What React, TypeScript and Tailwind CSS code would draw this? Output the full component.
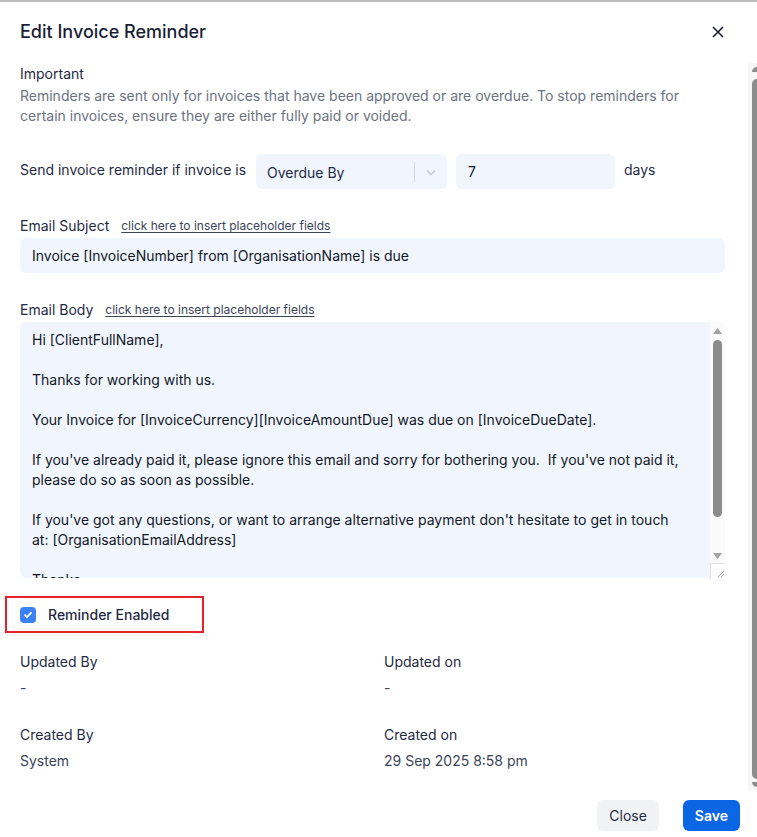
import React, { useState } from 'react';

const bodyLines = [
  'Hi [ClientFullName],',
  '',
  'Thanks for working with us.',
  '',
  'Your Invoice for [InvoiceCurrency][InvoiceAmountDue] was due on [InvoiceDueDate].',
  '',
  "If you've already paid it, please ignore this email and sorry for bothering you.  If you've not paid it,",
  'please do so as soon as possible.',
  '',
  "If you've got any questions, or want to arrange alternative payment don't hesitate to get in touch",
  'at: [OrganisationEmailAddress]',
  '',
  'Thanks,',
  '[OrganisationName]',
];

const FieldLabel: React.FC<{ label: string }> = ({ label }) => (
  <div className="flex items-center gap-3 h-5">
    <span className="text-sm text-[#1f2a44]">{label}</span>
    <button className="text-xs text-[#3b4457] underline underline-offset-2">click here to insert placeholder fields</button>
  </div>
);

const Meta: React.FC<{ label: string; value: string }> = ({ label, value }) => (
  <div className="flex flex-col gap-[6px]">
    <span className="text-sm leading-5 text-[#1f2a44]">{label}</span>
    <span className="text-sm leading-5 text-[#3b4457]">{value}</span>
  </div>
);

export default function App() {
  const [enabled, setEnabled] = useState(true);
  const [days, setDays] = useState('7');
  const [subject, setSubject] = useState('Invoice [InvoiceNumber] from [OrganisationName] is due');

  return (
    <div className="flex h-[837px] overflow-hidden bg-white border-t-2 border-[#bdbdbd] font-['Inter',sans-serif]">
      <div className="w-[745px] px-5 pt-[16px]">
        {/* Header */}
        <div className="flex items-center justify-between h-7">
          <h2 className="text-lg font-medium text-[#1a1f36]">Edit Invoice Reminder</h2>
          <button className="text-[#1a1f36]">
            <svg width="14" height="14" viewBox="0 0 14 14" fill="none" stroke="currentColor" strokeWidth="1.6">
              <path d="M2 2l10 10M12 2L2 12" />
            </svg>
          </button>
        </div>

        {/* Notice */}
        <div className="mt-[18px]">
          <div className="text-sm leading-5 text-[#1f2a44]">Important</div>
          <p className="mt-0.5 text-sm leading-5 text-[#6b7280] pr-10">
            Reminders are sent only for invoices that have been approved or are overdue. To stop reminders for certain invoices, ensure they are either fully paid or voided.
          </p>
        </div>

        {/* Trigger row */}
        <div className="mt-7 flex items-center gap-[9px]">
          <span className="w-[227px] text-sm text-[#1f2a44] -mt-[3px]">Send invoice reminder if invoice is</span>
          <div className="flex items-center w-[191px] h-[35px] rounded-md bg-[#f1f5fd] pl-[11px]">
            <span className="flex-1 text-sm text-[#1f2a44] pt-0.5">Overdue By</span>
            <span className="w-px h-5 bg-[#d4d8e0]" />
            <span className="w-8 flex justify-center text-[#c2c6cf]">
              <svg width="12" height="12" viewBox="0 0 12 12" fill="none" stroke="currentColor" strokeWidth="1.3">
                <path d="M2 4.5l4 4 4-4" />
              </svg>
            </span>
          </div>
          <input
            className="w-[159px] h-[35px] rounded-md bg-[#f1f5fd] px-3 text-sm text-[#111827] outline-none"
            value={days}
            onChange={(e) => setDays(e.target.value)}
          />
          <span className="text-sm text-[#1f2a44] -mt-[3px]">days</span>
        </div>

        {/* Subject */}
        <div className="mt-[27px]">
          <FieldLabel label="Email Subject" />
          <input
            className="mt-0.5 w-full h-[35px] rounded-md bg-[#f1f5fd] px-3 text-sm text-[#111827] outline-none"
            value={subject}
            onChange={(e) => setSubject(e.target.value)}
          />
        </div>

        {/* Body */}
        <div className="mt-[27px]">
          <FieldLabel label="Email Body" />
          <div className="mt-0.5 flex h-[256px] rounded-l-md bg-[#f1f5fd] overflow-hidden">
            <div className="flex-1 pl-3 pt-2 text-sm leading-5 text-[#111827] whitespace-pre">
              {bodyLines.map((line, i) => (
                <div key={i} className="h-5">{line}</div>
              ))}
            </div>
            {/* native-style scrollbar */}
            <div className="w-[15px] flex flex-col items-center bg-[#fafafa]">
              <svg className="mt-1.5" width="9" height="6" viewBox="0 0 9 6"><path d="M4.5 0L9 6H0z" fill="#a3a3a3" /></svg>
              <div className="mt-[6px] w-[9px] h-[177px] rounded-full bg-[#8c8c8c]" />
              <svg className="mt-[36px]" width="9" height="6" viewBox="0 0 9 6"><path d="M0 0h9L4.5 6z" fill="#a3a3a3" /></svg>
              <div className="mt-auto w-[15px] h-[15px] border-l border-t border-[#e2e2e2] bg-white flex items-end justify-end">
                <svg width="10" height="10" viewBox="0 0 10 10" stroke="#9a9a9a" strokeWidth="1">
                  <path d="M9 3L3 9M9 6L6 9" />
                </svg>
              </div>
            </div>
          </div>
        </div>

        {/* Enabled toggle */}
        <div className="mt-[18px] -ml-[15px] w-[199px] h-[37px] border-2 border-[#e3232b] flex items-center pl-[13px] gap-3">
          <button
            onClick={() => setEnabled(!enabled)}
            className={`w-4 h-4 rounded-[4px] flex items-center justify-center ${enabled ? 'bg-[#3b82f6]' : 'bg-white border border-gray-300'}`}
          >
            {enabled && (
              <svg width="10" height="10" viewBox="0 0 10 10" fill="none" stroke="white" strokeWidth="1.8" strokeLinecap="round" strokeLinejoin="round">
                <path d="M2 5.2l2 2 4-4.4" />
              </svg>
            )}
          </button>
          <span className="text-sm font-medium text-[#1f2a44]">Reminder Enabled</span>
        </div>

        {/* Audit info */}
        <div className="mt-[19px] grid grid-cols-[364px_1fr] gap-y-[27px]">
          <Meta label="Updated By" value="-" />
          <Meta label="Updated on" value="-" />
          <Meta label="Created By" value="System" />
          <Meta label="Created on" value="29 Sep 2025 8:58 pm" />
        </div>

        {/* Footer */}
        <div className="mt-[29px] flex justify-end gap-6 -mr-[15px]">
          <button className="h-[31px] px-[12px] rounded-md bg-[#f1f2f4] text-sm text-[#1f2a44]">Close</button>
          <button className="h-[31px] px-3 rounded-md bg-[#0b66e4] text-sm font-semibold text-white">Save</button>
        </div>
      </div>

      {/* page scrollbar */}
      <div className="ml-auto w-[9px] mt-[61px] h-[727px] bg-[#f6f6f6] flex flex-col items-end">
        <div className="w-[5px] h-[5px] mt-1 bg-[#8c8c8c] rounded-tl-full" />
        <div className="mt-[7px] w-[5px] h-[700px] bg-[#8c8c8c] rounded-tl-full rounded-bl-full" />
        <div className="mt-[3px] w-[5px] h-[5px] bg-[#8c8c8c] rounded-bl-full" />
      </div>
    </div>
  );
}
